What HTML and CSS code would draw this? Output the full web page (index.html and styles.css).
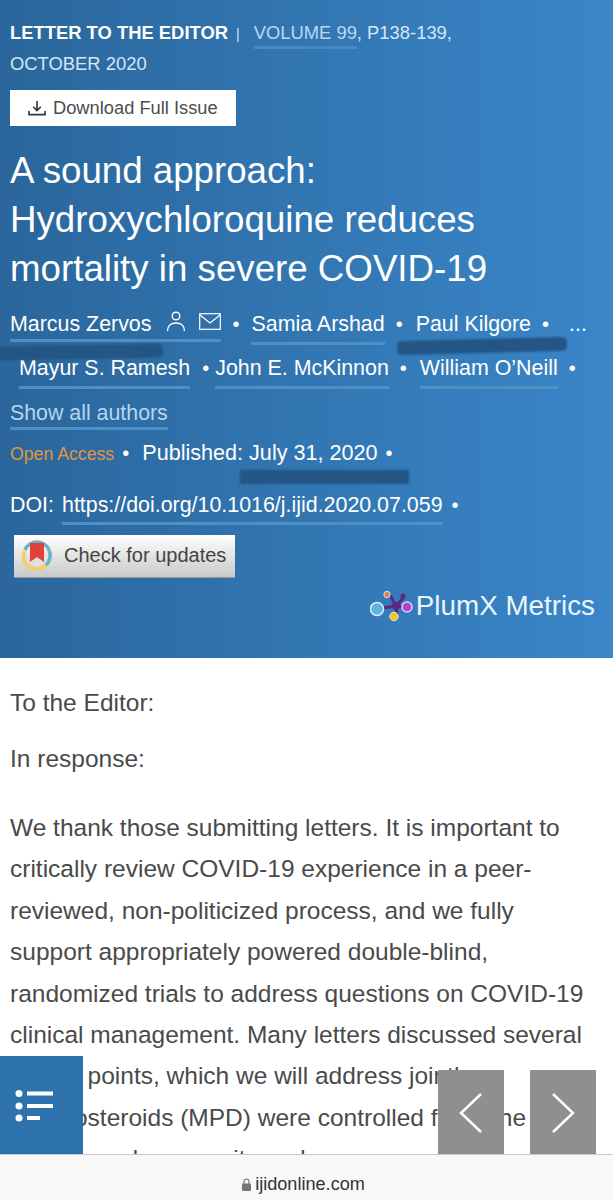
FILE: index.html
```html
<!DOCTYPE html>
<html lang="en">
<head>
  <meta charset="UTF-8">
  <meta name="viewport" content="width=device-width, initial-scale=1.0">
  <title>A sound approach: Hydroxychloroquine reduces mortality in severe COVID-19</title>
  <link rel="stylesheet" href="styles.css">
</head>
<body>
  <div class="page">
    <header class="banner">
      <div class="meta">
        <b>LETTER TO THE EDITOR</b><span class="pipe">|</span><a class="vol">VOLUME 99</a><span>, P138-139,</span>
        <span class="issue-date">OCTOBER 2020</span>
      </div>
      <a class="download">
        <svg width="18" height="16" viewBox="0 0 18 16" fill="none" stroke="#333" stroke-width="1.6">
          <path d="M9 1v9M5.2 6.8L9 10.6l3.8-3.8M1 11v3.6h16V11"/>
        </svg>
        Download Full Issue
      </a>
      <h1 class="title">A sound approach: Hydroxychloroquine reduces mortality in severe COVID-19</h1>
      <div class="authors">
        <div class="row">
          <a class="name first">Marcus Zervos
            <svg class="ico-person" width="20" height="22" viewBox="0 0 20 22" fill="none" stroke="#fff" stroke-width="1.4">
              <circle cx="10" cy="5" r="3.800"/>
              <path d="M1.500 20c0-5 3.500-8 8.500-8s8.500 3 8.500 8"/>
            </svg>
            <svg class="ico-mail" width="22" height="17" viewBox="0 0 22 17" fill="none" stroke="#fff" stroke-width="1.2">
              <rect x="0.700" y="0.700" width="20.600" height="15.600"/>
              <path d="M1 2l10 8 10-8"/>
            </svg>
          </a>
          <span class="dot first-dot">•</span>
          <a class="name">Samia Arshad</a>
          <span class="dot">•</span>
          <a class="name">Paul Kilgore</a>
          <span class="dot">•</span>
          <span class="more">...</span>
        </div>
        <div class="row second">
          <a class="name">Mayur S. Ramesh</a>
          <span class="dot tight">•</span>
          <a class="name">John E. McKinnon</a>
          <span class="dot">•</span>
          <a class="name">William O’Neill</a>
          <span class="dot">•</span>
        </div>
      </div>
      <a class="show-all">Show all authors</a>
      <div class="pub">
        <span class="open">Open Access</span><span class="dot">•</span><span class="pub-date">Published: July 31, 2020</span><span class="dot">•</span>
      </div>
      <div class="doi"><span>DOI:</span><a class="name">https://doi.org/10.1016/j.ijid.2020.07.059</a><span class="dot">•</span></div>
      <a class="updates">
        <svg width="32" height="32" viewBox="0 0 32 32" fill="none">
          <path d="M4 11A13 13 0 0 1 28 11" stroke="#68b3c4" stroke-width="3.500"/>
          <path d="M3.500 12A13 13 0 0 0 25 26" stroke="#f2cf60" stroke-width="3.500"/>
          <path d="M28 11a13 13 0 0 1-3 15" stroke="#68b3c4" stroke-width="3.500"/>
          <path d="M9 4h14v19l-7-5-7 5z" fill="#e2403c"/>
          <path d="M9 24l7-5 7 5-4 3h-6z" fill="#e4e0dc"/>
        </svg>
        Check for updates
      </a>
      <div class="plum">
        <svg width="44" height="32" viewBox="0 0 44 32">
          <path d="M26 16L20 5M26 16l8-9M26 16l12 1M26 16l-14 2M26 16l1 11" stroke="#5a2a82" stroke-width="3" fill="none"/>
          <circle cx="26" cy="16" r="4" fill="#5a2a82"/>
          <circle cx="33" cy="6" r="2.500" fill="#5a2a82"/>
          <circle cx="17" cy="4.500" r="3.200" fill="#e77f4b" stroke="#cfe4f4"/>
          <circle cx="37" cy="17" r="5" fill="#b13fd8" stroke="#e0d4f4" stroke-width="1.500"/>
          <circle cx="7" cy="19" r="6.500" fill="#5cb4e6" stroke="#d6ecf8" stroke-width="1.500"/>
          <circle cx="24" cy="26.500" r="4.200" fill="#f2c230" stroke="#f4eacc"/>
        </svg>
        <span>PlumX Metrics</span>
      </div>
      <!-- marker scribbles over the screenshot -->
      <div class="scribble s1"></div>
      <div class="scribble s2"></div>
      <div class="scribble s3"></div>
    </header>

    <main class="body-text">
      <p class="short">To the Editor:</p>
      <p class="short">In response:</p>
      <p class="long">We thank those submitting letters. It is important to critically review COVID-19 experience in a peer-reviewed, non-politicized process, and we fully support appropriately powered double-blind, randomized trials to address questions on COVID-19 clinical management. Many letters discussed several similar points, which we will address jointly.<br>Corticosteroids (MPD) were controlled for in the<br>registry and propensity and were</p>
    </main>
  </div>

  <a class="toc-btn">
    <svg width="40" height="32" viewBox="0 0 40 32" fill="#fff">
      <circle cx="4" cy="3.500" r="3.500"/><rect x="12" y="1.500" width="26" height="4"/>
      <circle cx="4" cy="16" r="3.500"/><rect x="12" y="14" width="26" height="4"/>
      <circle cx="4" cy="28" r="3.500"/><rect x="12" y="26" width="13" height="4"/>
    </svg>
  </a>
  <a class="nav-btn prev">
    <svg width="24" height="40" viewBox="0 0 24 40" fill="none" stroke="#fff" stroke-width="2.500"><path d="M22 1L2 20l20 19"/></svg>
  </a>
  <a class="nav-btn next">
    <svg width="24" height="40" viewBox="0 0 24 40" fill="none" stroke="#fff" stroke-width="2.500"><path d="M2 1l20 19L2 39"/></svg>
  </a>
  <div class="urlbar">
    <svg width="9" height="13" viewBox="0 0 9 13"><path d="M2 6V3.500a2.500 2.500 0 0 1 5 0V6" fill="none" stroke="#777" stroke-width="1.200"/><rect y="5.500" width="9" height="7.500" rx="1" fill="#777"/></svg>
    <span>ijidonline.com</span>
  </div>
</body>
</html>
```

FILE: styles.css
```css
html, body{
  margin: 0;
  padding: 0;
  height: 1200px;
  overflow: hidden;
  background-color: #fff;
}
body{
  font-family: "Liberation Sans", Arial, sans-serif;
  color: #4a4a4a;
  position: relative;
}
.banner{
  position: relative;
  height: 658px;
  box-sizing: border-box;
  padding: 18px 10px 0;
  color: #fff;
  background: linear-gradient(90deg, #2a669b 0%, #3a86c9 100%);
}
.meta{
  font-size: 18.400px;
  line-height: 29px;
  color: #d5e6f5;
}
.meta b{
  color: #fff;
}
.issue-date{
  display: block;
}
.pipe{
  margin: 0 14px 0 8px;
  font-size: 14px;
}
.vol{
  color: #b9d8f0;
  padding-bottom: 3px;
  border-bottom: 3px solid #4a88bd;
}
.download{
  display: flex;
  align-items: center;
  gap: 7px;
  width: 226px;
  height: 36px;
  box-sizing: border-box;
  padding-left: 18px;
  margin-top: 12px;
  background-color: #fff;
  color: #4d4d4d;
  font-size: 18.300px;
}
.title{
  margin: 20px 0 0;
  font-weight: normal;
  font-size: 36.700px;
  line-height: 49px;
  width: 520px;
}
.authors{
  margin-top: 15px;
}
.row{
  display: flex;
  align-items: baseline;
  font-size: 21.400px;
  height: 44px;
  line-height: 32px;
}
.row.second{
  padding-left: 9px;
}
.name{
  border-bottom: 3px solid #4f8fc4;
  padding-bottom: 2px;
  white-space: nowrap;
}
.name.first{
  display: inline-flex;
  align-items: center;
  line-height: 26px;
}
.ico-person{
  margin: -4px 0 0 15px;
}
.ico-mail{
  margin: -6px 0 0 13px;
}
.dot{
  margin: 0 13px 0 11px;
  font-size: 20px;
}
.dot.first-dot{
  margin-right: 12px;
}
.dot.tight{
  margin: 0 6px 0 12px;
}
.more{
  margin-left: 7px;
}
.show-all{
  display: inline-block;
  margin-top: 4px;
  font-size: 21.350px;
  line-height: 26px;
  color: #b6d5ee;
  border-bottom: 3px solid #4f8fc4;
  padding-bottom: 1px;
}
.pub{
  margin-top: 8px;
  display: flex;
  align-items: baseline;
  font-size: 21.600px;
  line-height: 30px;
}
.open{
  color: #e2963f;
  font-size: 17.700px;
}
.pub .dot{
  margin: 0 13px 0 8px;
}
.doi{
  display: flex;
  align-items: baseline;
  gap: 8px;
  margin-top: 21px;
  font-size: 21.400px;
  line-height: 30px;
}
.doi .dot{
  margin-left: 1px;
}
.updates{
  display: flex;
  align-items: center;
  gap: 11px;
  width: 221px;
  height: 43px;
  box-sizing: border-box;
  padding: 0 0 2px 7px;
  margin: 10px 0 0 4px;
  font-size: 20px;
  color: #444;
  background: linear-gradient(180deg, #fff 0%, #c9c9c9 100%);
  border-bottom: 1px solid #999;
}
.plum{
  display: flex;
  justify-content: flex-end;
  align-items: center;
  gap: 2px;
  margin: 11px 8px 0 0;
  font-size: 27.800px;
  line-height: 34px;
  color: #eaf5fd;
}
.scribble{
  position: absolute;
  background-color: #235585;
  filter: blur(1px);
}
.s1{
  left: -4px;
  top: 345px;
  width: 167px;
  height: 14px;
  border-radius: 0 5px 5px 0;
  transform: rotate(-1deg);
}
.s2{
  left: 397px;
  top: 339px;
  width: 170px;
  height: 14px;
  border-radius: 5px;
  transform: rotate(-1.500deg);
}
.s3{
  left: 240px;
  top: 470px;
  width: 169px;
  height: 14px;
}
.body-text{
  padding: 30px 10px 0;
  font-size: 24.500px;
  color: #4a4a4a;
}
.short{
  margin: 0 0 26px;
  line-height: 30px;
}
.long{
  margin: 0;
  padding-top: 7px;
  width: 576px;
  line-height: 41.400px;
}
.toc-btn{
  position: absolute;
  left: 0;
  top: 1056px;
  width: 83px;
  height: 99px;
  background-color: #2e72ad;
  display: flex;
  align-items: center;
  padding-left: 15px;
  box-sizing: border-box;
}
.nav-btn{
  position: absolute;
  top: 1070px;
  width: 66px;
  height: 85px;
  background-color: #8f8f8f;
  display: flex;
  align-items: center;
  justify-content: center;
}
.prev{
  left: 438px;
}
.next{
  left: 530px;
}
.urlbar{
  position: absolute;
  left: 0;
  right: 0;
  top: 1154px;
  height: 46px;
  box-sizing: border-box;
  border-top: 1px solid #c8c8c8;
  background-color: #f8f8f8;
  display: flex;
  justify-content: center;
  align-items: center;
  gap: 4px;
  padding: 14px 6px 0 0;
  font-size: 18.100px;
  color: #333;
}
```
